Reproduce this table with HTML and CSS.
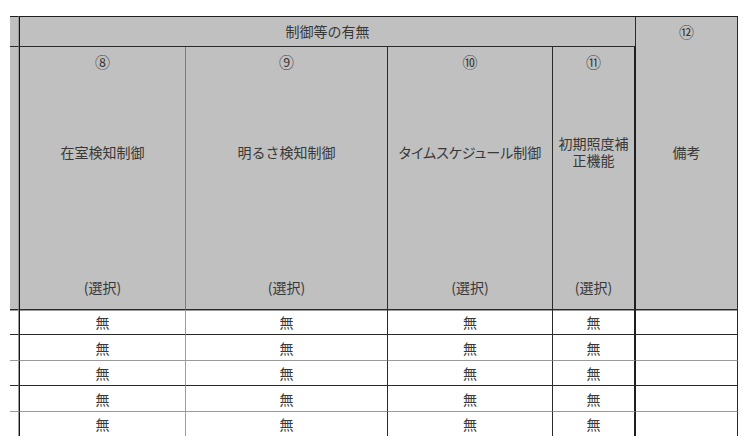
FILE: index.html
```html
<!DOCTYPE html>
<html lang="ja">
<head>
<meta charset="utf-8">
<title>制御等の有無</title>
<link rel="stylesheet" href="styles.css">
</head>
<body>
<table class="sheet">
  <colgroup>
    <col class="col-strip">
    <col class="col8">
    <col class="col9">
    <col class="col10">
    <col class="col11">
    <col class="col12">
  </colgroup>
  <thead>
    <tr class="hr1">
      <td class="strip top"></td>
      <td class="group top c8" colspan="4"><div class="group-in">制御等の有無</div></td>
      <td class="remark top" rowspan="2">
        <div class="remark-in">
          <span class="num">⑫</span>
          <span class="rlabel">備考</span>
        </div>
      </td>
    </tr>
    <tr class="hr2">
      <td class="strip"></td>
      <td class="c8 w8"><div class="hcell"><span class="num">⑧</span><span class="label">在室検知制御</span><span class="sel">(選択)</span></div></td>
      <td><div class="hcell"><span class="num">⑨</span><span class="label">明るさ検知制御</span><span class="sel">(選択)</span></div></td>
      <td><div class="hcell"><span class="num">⑩</span><span class="label kana">タイムスケジュール制御</span><span class="sel">(選択)</span></div></td>
      <td class="thick"><div class="hcell"><span class="num">⑪</span><span class="label">初期照度補正機能</span><span class="sel">(選択)</span></div></td>
    </tr>
  </thead>
  <tbody>
    <tr class="row odd first"><td class="strip"></td><td class="c8">無</td><td>無</td><td>無</td><td class="thick">無</td><td class="last"></td></tr>
    <tr class="row even"><td class="strip"></td><td class="c8">無</td><td>無</td><td>無</td><td class="thick">無</td><td class="last"></td></tr>
    <tr class="row odd"><td class="strip"></td><td class="c8">無</td><td>無</td><td>無</td><td class="thick">無</td><td class="last"></td></tr>
    <tr class="row even"><td class="strip"></td><td class="c8">無</td><td>無</td><td>無</td><td class="thick">無</td><td class="last"></td></tr>
    <tr class="row odd end"><td class="strip"></td><td class="c8">無</td><td>無</td><td>無</td><td class="thick">無</td><td class="last"></td></tr>
  </tbody>
</table>
</body>
</html>
```

FILE: styles.css
```css
html, body {
  margin: 0;
  padding: 0;
  background: #ffffff;
}

body {
  font-family: "Noto Sans CJK JP", "Noto Sans", sans-serif;
  font-size: 14px;
  color: #383838;
}

.sheet {
  margin: 16px 0 0 10px;
  border-collapse: separate;
  border-spacing: 0;
  table-layout: fixed;
  width: 728px;
}

.col-strip { width: 9px; }
.col8 { width: 167px; }
.col9 { width: 202px; }
.col10 { width: 165px; }
.col11 { width: 83px; }
.col12 { width: 102px; }

.sheet td {
  box-sizing: border-box;
  padding: 0;
  text-align: center;
  vertical-align: top;
  border-right: 1px solid #2a2a2a;
  border-bottom: 1px solid #2a2a2a;
}

.sheet td.top {
  border-top: 1px solid #1e1e1e;
}

.sheet thead td {
  background: #c0c0c0;
}

.sheet td.strip { border-right: 1px solid #9a9a9a; }
.sheet td.c8 { border-left: 1px solid #151515; }
.sheet td.thick { border-right: 2px solid #1e1e1e; }
.sheet thead td.w8 { border-right-color: #7a7a7a; }
.sheet tbody td.c8 { border-right-color: #9c9c9c; }

/* header row 1 */
.group-in {
  height: 29px;
  line-height: 29px;
}

/* header row 2 */
.hcell {
  height: 262px;
  display: flex;
  flex-direction: column;
  align-items: center;
}

.num {
  display: block;
  line-height: 16px;
  font-size: 15px;
  padding-top: 7px;
}

.label {
  height: 164px;
  display: flex;
  align-items: center;
  justify-content: center;
  line-height: 17px;
  padding: 0 1px;
}

.kana {
  font-feature-settings: "palt";
}

.sel {
  display: block;
  line-height: 16px;
  padding-top: 45px;
}

/* remarks column */
.remark-in {
  height: 292px;
  display: flex;
  flex-direction: column;
  align-items: center;
}

.rlabel {
  display: block;
  line-height: 16px;
  margin-top: 104px;
}

/* body rows */
.sheet tbody td {
  vertical-align: middle;
  background: #ffffff;
}

.row.odd td {
  height: 25px;
}

.row.even td {
  height: 26px;
  border-bottom-color: #9a9a9a;
}

.row.first td {
  box-shadow: inset 0 1px 0 #9a9a9a;
}

.row.end td {
  height: 24px;
  border-bottom: 0;
}
```
